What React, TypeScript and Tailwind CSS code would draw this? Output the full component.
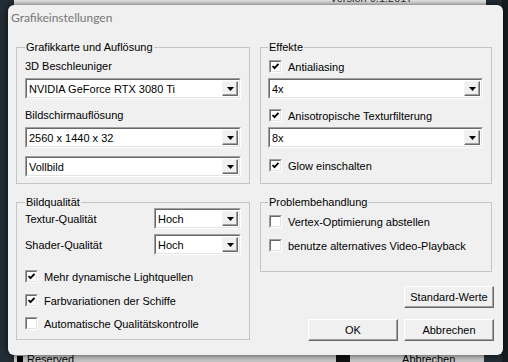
import type { ReactNode } from "react";

const DropBtn = () => (
  <div className="mr-[1px] flex h-[15px] w-[16px] shrink-0 items-center justify-center border border-t-[#f4f4f4] border-l-[#f4f4f4] border-r-[#696969] border-b-[#696969] bg-[#f0f0f0] shadow-[inset_-1px_-1px_0_#a0a0a0]">
    <svg width="7" height="4" viewBox="0 0 7 4">
      <polygon points="0,0 7,0 3.5,4" fill="#000" />
    </svg>
  </div>
);

function Combo({ value, className = "" }: { value: string; className?: string }) {
  return (
    <div className={`flex h-[21px] border border-t-[#a0a0a0] border-l-[#a0a0a0] border-r-white border-b-white ${className}`}>
      <div className="flex flex-1 items-center border border-t-[#696969] border-l-[#696969] border-r-[#e3e3e3] border-b-[#e3e3e3] bg-white">
        <span className="flex-1 pl-[2px] leading-[14px]">{value}</span>
        <DropBtn />
      </div>
    </div>
  );
}

function Check({ label, checked = false, className = "" }: { label: string; checked?: boolean; className?: string }) {
  return (
    <div className={`flex h-[17px] items-center gap-[6px] ${className}`}>
      <div className="h-[13px] w-[13px] shrink-0 border border-t-[#a0a0a0] border-l-[#a0a0a0] border-r-white border-b-white">
        <div className="h-full w-full border border-t-[#696969] border-l-[#696969] border-r-[#e3e3e3] border-b-[#e3e3e3] bg-white">
          {checked && (
            <svg width="9" height="9" viewBox="0 0 9 9" className="block">
              <polyline points="1.5,4 3.5,6.2 7.5,1.8" fill="none" stroke="#000" strokeWidth="1.8" />
            </svg>
          )}
        </div>
      </div>
      <span className="leading-[14px]">{label}</span>
    </div>
  );
}

function Group({ title, className = "", children }: { title: string; className?: string; children: ReactNode }) {
  return (
    <fieldset className={`min-w-0 border border-[#c5c5c5] ${className}`}>
      <legend className="px-[1px] leading-[12px]">{title}</legend>
      {children}
    </fieldset>
  );
}

function Button({ label }: { label: string }) {
  return (
    <div className="flex h-[22px] w-[90px] items-center justify-center border border-t-white border-l-white border-r-[#696969] border-b-[#696969] bg-[#f0f0f0] shadow-[inset_-1px_-1px_0_#a0a0a0]">
      {label}
    </div>
  );
}

export default function App() {
  return (
    <div className="relative h-[362px] w-[508px] overflow-hidden bg-[#222c35] font-['Liberation_Sans',Arial,sans-serif] text-[11px] text-black">
      {/* app behind the dialog */}
      <div className="absolute left-[14px] top-[-10px] flex h-[15px] w-[472px] items-end bg-[#e6e6e6]">
        <span className="ml-[316px] leading-[13px] text-[#333]">Version 0.1.2017</span>
      </div>
      <div className="absolute right-0 top-0 h-full w-[6px] bg-[#181c20]" />
      <div className="absolute left-[14px] top-[353px] flex h-[12px] w-[470px] items-start bg-[#c4c4c4]">
        <div className="ml-[3px] mt-[3px] h-[6px] w-[6px] bg-black" />
        <span className="ml-[4px] leading-[13px]">Reserved</span>
        <div className="ml-[262px] h-full w-[14px] bg-[#111]" />
        <span className="ml-[52px] leading-[13px]">Abbrechen</span>
      </div>

      {/* dialog */}
      <div className="absolute left-[8px] top-[5px] flex h-[350px] w-[495px] flex-col rounded-[6px] bg-[#f0f0f0] shadow-[0_0_6px_rgba(0,0,0,0.7)]">
        <div className="flex h-[25px] items-center pl-[3px] font-['Lato',sans-serif] text-[12px] text-[#777]">
          Grafikeinstellungen
        </div>
        <div className="flex gap-[10px] pl-[8px] pt-[11px]">
          <div className="flex w-[234px] flex-col">
            <Group title="Grafikkarte und Auflösung" className="px-[8px] pb-[6px]">
              <div className="mt-[6px] leading-[14px]">3D Beschleuniger</div>
              <Combo value="NVIDIA GeForce RTX 3080 Ti" className="mt-[5px]" />
              <div className="mt-[9px] leading-[14px]">Bildschirmauflösung</div>
              <Combo value="2560 x 1440 x 32" className="mt-[5px]" />
              <Combo value="Vollbild" className="mt-[8px]" />
            </Group>
            <Group title="Bildqualität" className="mt-[12px] px-[8px] pb-[7px]">
              <div className="flex items-center justify-between">
                <span className="leading-[14px]">Textur-Qualität</span>
                <Combo value="Hoch" className="w-[87px]" />
              </div>
              <div className="mt-[5px] flex items-center justify-between">
                <span className="leading-[14px]">Shader-Qualität</span>
                <Combo value="Hoch" className="w-[87px]" />
              </div>
              <Check label="Mehr dynamische Lightquellen" checked className="mt-[13px]" />
              <Check label="Farbvariationen der Schiffe" checked className="mt-[7px]" />
              <Check label="Automatische Qualitätskontrolle" className="mt-[6px]" />
            </Group>
          </div>
          <div className="flex w-[232px] flex-col">
            <Group title="Effekte" className="pb-[9px] pl-[7px] pr-[8px]">
              <Check label="Antialiasing" checked className="ml-[1px] mt-[5px]" />
              <Combo value="4x" className="mt-[3px]" />
              <Check label="Anisotropische Texturfilterung" checked className="ml-[1px] mt-[8px]" />
              <Combo value="8x" className="mt-[3px]" />
              <Check label="Glow einschalten" checked className="ml-[1px] mt-[9px]" />
            </Group>
            <Group title="Problembehandlung" className="mt-[12px] pb-[17px] pl-[7px] pr-[8px]">
              <Check label="Vertex-Optimierung abstellen" className="ml-[1px] mt-[5px]" />
              <Check label="benutze alternatives Video-Playback" className="ml-[1px] mt-[7px]" />
            </Group>
            <div className="-mr-[2px] mt-[14px] flex justify-end">
              <Button label="Standard-Werte" />
            </div>
            <div className="-mr-[2px] mt-[11px] flex justify-end gap-[6px]">
              <Button label="OK" />
              <Button label="Abbrechen" />
            </div>
          </div>
        </div>
      </div>
    </div>
  );
}
